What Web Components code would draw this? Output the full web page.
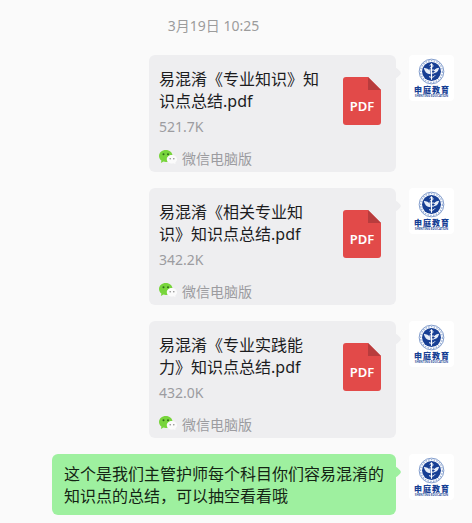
<!DOCTYPE html>
<html lang="zh-CN">
<head>
<meta charset="utf-8">
<meta name="viewport" content="width=device-width, initial-scale=1">
<title>聊天记录</title>
<style>
    body {
        margin: 0;
        background: #fafafa;
        font-family: 'Noto Sans', 'Noto Sans CJK SC', sans-serif;
    }
</style>
</head>
<body>
<chat-log>
    <chat-time>3月19日 10:25</chat-time>
    <chat-row><file-card size="521.7K">易混淆《专业知识》知识点总结.pdf</file-card></chat-row>
    <chat-row><file-card size="342.2K">易混淆《相关专业知识》知识点总结.pdf</file-card></chat-row>
    <chat-row><file-card size="432.0K">易混淆《专业实践能力》知识点总结.pdf</file-card></chat-row>
    <chat-row tone="green"><chat-text>这个是我们主管护师每个科目你们容易混淆的知识点的总结，可以抽空看看哦</chat-text></chat-row>
</chat-log>

<script>
class ChatLog extends HTMLElement {
    constructor() {
        super();
        this.attachShadow({ mode: 'open' });
        this.shadowRoot.innerHTML = `
            <style>
                :host {
                    display: flex;
                    flex-direction: column;
                    gap: 16px;
                    padding: 16px 18px 8px;
                }
            </style>
            <slot></slot>
        `;
    }
}

class ChatTime extends HTMLElement {
    constructor() {
        super();
        this.attachShadow({ mode: 'open' });
        this.shadowRoot.innerHTML = `
            <style>
                :host {
                    display: block;
                    padding-right: 45px;
                    margin-bottom: 3px;
                    text-align: center;
                    font-size: 14px;
                    line-height: 20px;
                    color: #9c9c9c;
                }
            </style>
            <slot></slot>
        `;
    }
}

// One outgoing message: bubble with its tail, then the sender's avatar
class ChatRow extends HTMLElement {
    constructor() {
        super();
        this.attachShadow({ mode: 'open' });
        this.shadowRoot.innerHTML = `
            <style>
                :host {
                    --bubble: #eeeef0;
                    display: flex;
                    justify-content: flex-end;
                    align-items: flex-start;
                    gap: 13px;
                }

                :host([tone="green"]) {
                    --bubble: #9ef09f;
                }

                .bubble {
                    position: relative;
                    min-width: 0;
                    background: var(--bubble);
                    border-radius: 6px;
                }

                .bubble::after {
                    content: '';
                    position: absolute;
                    top: 14px;
                    right: -4px;
                    width: 8px;
                    height: 8px;
                    border-radius: 2px;
                    background: var(--bubble);
                    transform: rotate(45deg);
                    z-index: -1;
                }
            </style>
            <div class="bubble"><slot></slot></div>
            <user-avatar></user-avatar>
        `;
    }
}

class UserAvatar extends HTMLElement {
    constructor() {
        super();
        this.attachShadow({ mode: 'open' });
        this.shadowRoot.innerHTML = `
            <style>
                :host {
                    display: flex;
                    flex-direction: column;
                    align-items: center;
                    flex: none;
                    box-sizing: border-box;
                    width: 45px;
                    height: 46px;
                    padding-top: 3px;
                    border-radius: 4px;
                    background: #fff;
                    color: #173f94;
                    white-space: nowrap;
                }

                svg {
                    display: block;
                }

                .name {
                    display: flex;
                    gap: 1px;
                    font-size: 8px;
                    font-weight: 900;
                    line-height: 9px;
                }

                .sub {
                    font-size: 3px;
                    font-weight: 600;
                    line-height: 4px;
                }
            </style>
            <svg width="27" height="27" viewBox="0 0 28 28" aria-hidden="true">
                <circle cx="14" cy="14" r="12.8" fill="#fff" stroke="#5d7fbd" stroke-width=".8"/>
                <circle cx="14" cy="14" r="11.3" fill="none" stroke="#9db2d8" stroke-width="1.4" stroke-dasharray="1.6 1.3"/>
                <circle cx="14" cy="14" r="9.8" fill="#173f94"/>
                <g fill="none" stroke="#fff" stroke-linecap="round" stroke-linejoin="round">
                    <path d="M14 6v16" stroke-width="1.2"/>
                    <path d="M12.3 7.3q1.7-1.8 3.2 0t-2.8 3" stroke-width=".9"/>
                    <path d="M11.5 12.5h5q2 .6 1.3 2.2-.6 1.200-3.8 1.100M11.8 19.5q3.800 1.600 5.600-1.200" stroke-width="1"/>
                </g>
                <path d="M6 10.2q4.200.4 7 3.600v3q-6-.2-7-6.600zM22 10.2q-3 .2-4.700 1.800l.8 3.800q3.200-1.600 3.900-5.600z" fill="#e6edf8"/>
            </svg>
            <div class="name"><span>申</span><span>庭</span><span>教</span><span>育</span></div>
            <div class="sub">SHENTING EDUCATION</div>
        `;
    }
}

class FileCard extends HTMLElement {
    constructor() {
        super();
        this.attachShadow({ mode: 'open' });
    }

    connectedCallback() {
        this.shadowRoot.innerHTML = `
            <style>
                :host {
                    display: block;
                    width: 247px;
                    max-width: 100%;
                }

                a {
                    display: block;
                    padding: 13px 15px 3px 10px;
                    color: #1c1c1e;
                    text-decoration: none;
                }

                .file {
                    display: flex;
                    justify-content: space-between;
                    align-items: flex-start;
                }

                .file svg {
                    margin-top: 9px;
                }

                .name {
                    width: 168px;
                    margin-bottom: 5px;
                    font-size: 16px;
                    line-height: 22px;
                }

                .size, .source {
                    font-size: 14px;
                    line-height: 20px;
                    color: #9c9ca0;
                }

                .source {
                    display: flex;
                    align-items: center;
                    gap: 5px;
                    margin-top: 12px;
                }

                svg {
                    display: block;
                    flex: none;
                }
            </style>
            <a href="#">
                <div class="file">
                    <div>
                        <div class="name"><slot></slot></div>
                        <div class="size">${this.getAttribute('size')}</div>
                    </div>
                    <svg width="38" height="48" viewBox="0 0 38 48" aria-hidden="true">
                        <path d="M3 0h22l13 13v32q0 3-3 3H3q-3 0-3-3V3q0-3 3-3z" fill="#e24a49"/>
                        <path d="M25 0l13 13H25z" fill="#b83c3d"/>
                        <text x="19" y="34" font-size="13" font-weight="600" fill="#fff" text-anchor="middle" font-family="Noto Sans, sans-serif">PDF</text>
                    </svg>
                </div>
                <div class="source">
                    <svg width="18" height="18" viewBox="0 0 18 18" aria-hidden="true">
                        <path d="M6.8 0C3 0 0 2.600 0 6c0 1.900.9 3.500 2.400 4.600L1.900 13l2.600-1.400c.8.3 1.500.4 2.300.4 3.800 0 6.800-2.600 6.800-6S10.600 0 6.800 0z" fill="#78d53c"/>
                        <circle cx="4.5" cy="4.2" r="1" fill="#2f6b1c"/>
                        <circle cx="9" cy="4.2" r="1" fill="#2f6b1c"/>
                        <path d="M12.8 5C9.900 5 7.800 6.900 7.800 9.300s2.100 4.300 5 4.300c.7 0 1.300-.1 1.900-.3l1.900 1-.4-1.700c1.100-.8 1.800-2 1.800-3.300C18 6.900 15.700 5 12.800 5z" fill="#fbfbfb"/>
                        <circle cx="11.2" cy="8.7" r=".8" fill="#8a8a8a"/>
                        <circle cx="14.8" cy="8.7" r=".8" fill="#8a8a8a"/>
                    </svg>
                    <span>微信电脑版</span>
                </div>
            </a>
        `;
    }
}

class ChatText extends HTMLElement {
    constructor() {
        super();
        this.attachShadow({ mode: 'open' });
        this.shadowRoot.innerHTML = `
            <style>
                :host {
                    display: block;
                    max-width: 320px;
                    padding: 9px 12px 8px;
                    font-size: 16px;
                    line-height: 22px;
                    color: #142414;
                }
            </style>
            <slot></slot>
        `;
    }
}

customElements.define('chat-log', ChatLog);
customElements.define('chat-time', ChatTime);
customElements.define('user-avatar', UserAvatar);
customElements.define('chat-row', ChatRow);
customElements.define('file-card', FileCard);
customElements.define('chat-text', ChatText);
</script>
</body>
</html>
